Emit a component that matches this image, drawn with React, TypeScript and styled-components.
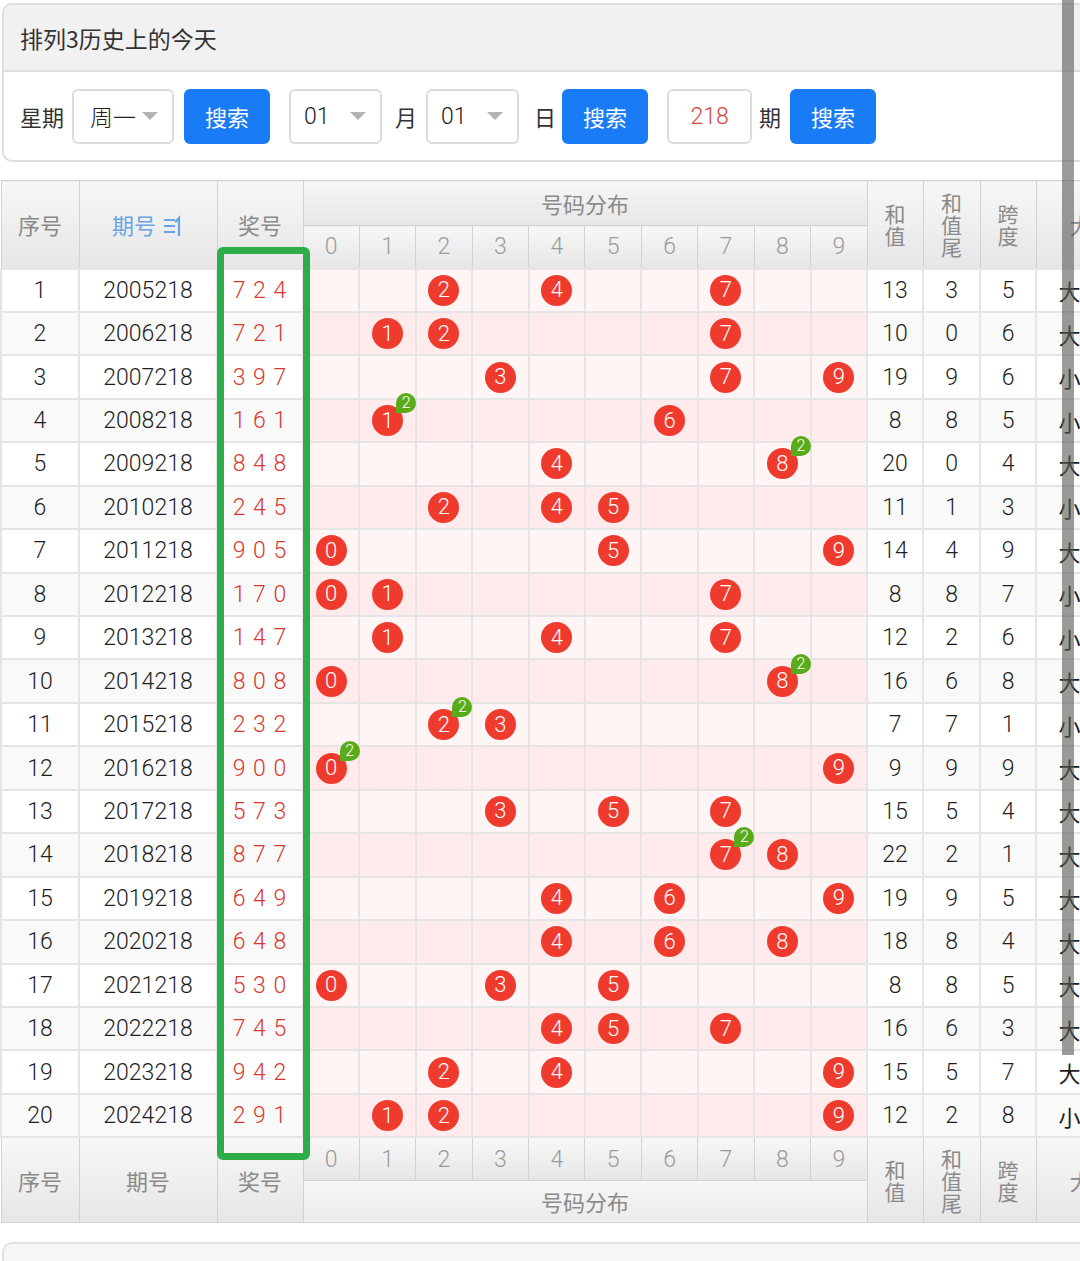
import React from 'react';
import styled, { createGlobalStyle } from 'styled-components';

const GlobalStyle = createGlobalStyle`
  html, body { margin: 0; padding: 0; overflow: hidden; background: #fff; }
  body { font-family: Roboto, "Noto Sans CJK SC", sans-serif; color: #333; }
  * { box-sizing: border-box; }
`;

const CJK = `"Noto Sans CJK SC", "Noto Sans", sans-serif`;
const NUM = `Roboto, "Noto Sans", sans-serif`;

const Page = styled.div`
  position: relative;
  width: 1080px;
  height: 1261px;
  overflow: hidden;
  padding-top: 3px;
`;

const Card = styled.section`
  margin-left: 2px;
  width: 1100px;
  border: 2px solid #dedede;
  border-radius: 10px;
  overflow: hidden;
  background: #fff;
`;

const CardHead = styled.header`
  height: 67px;
  background: #f1f1f1;
  border-bottom: 2px solid #dedede;
  display: flex;
  align-items: center;
  padding-left: 16px;
  font-family: ${CJK};
  font-size: 23px;
  color: #333;
`;

const SearchRow = styled.div`
  height: 88px;
  display: flex;
  align-items: center;
  padding-left: 16px;
`;

const Label = styled.span<{ $ml?: number }>`
  margin-left: ${(p) => p.$ml ?? 0}px;
  font-family: ${CJK};
  font-size: 22px;
  color: #333;
  line-height: 1;
`;

const Select = styled.div<{ $w: number; $pl: number; $ml: number }>`
  margin-left: ${(p) => p.$ml}px;
  width: ${(p) => p.$w}px;
  height: 55px;
  border: 2px solid #dcdcdc;
  border-radius: 6px;
  display: flex;
  align-items: center;
  justify-content: space-between;
  padding: 0 14px 0 ${(p) => p.$pl}px;
  font-family: ${NUM}, "Noto Sans CJK SC";
  font-weight: 300;
  font-size: 23px;
  color: #222;
  background: #fff;
`;

const Caret = styled.span`
  width: 0;
  height: 0;
  border-left: 8px solid transparent;
  border-right: 8px solid transparent;
  border-top: 8px solid #b3b3b3;
`;

const Button = styled.button<{ $ml: number }>`
  margin-left: ${(p) => p.$ml}px;
  width: 86px;
  height: 55px;
  border: none;
  border-radius: 6px;
  background: #1a7bf6;
  color: #fff;
  font-family: ${CJK};
  font-size: 22px;
  padding: 0;
`;

const Input = styled.div<{ $ml: number }>`
  margin-left: ${(p) => p.$ml}px;
  width: 85px;
  height: 55px;
  border: 2px solid #dcdcdc;
  border-radius: 6px;
  display: flex;
  align-items: center;
  justify-content: center;
  font-family: ${NUM};
  font-weight: 300;
  font-size: 23px;
  color: #d9463c;
`;

const TableWrap = styled.div`
  position: relative;
  margin-top: 18px;
  width: 1080px;
  overflow: hidden;
`;

const Table = styled.table`
  border-collapse: collapse;
  table-layout: fixed;
  width: 1146px;
  border-top: 1px solid #d9d9d9;
`;

const Col = styled.col<{ $w: number }>`
  width: ${(p) => p.$w}px;
`;

const HeadRow = styled.tr<{ $h: number }>`
  height: ${(p) => p.$h}px;
`;

const Th = styled.th<{ $blue?: boolean; $light?: boolean }>`
  border: 1px solid #d2d2d2;
  background: ${(p) => (p.$light ? 'linear-gradient(#f6f6f6, #ececec)' : 'linear-gradient(#f7f7f7, #e6e6e6)')};
  color: ${(p) => (p.$blue ? '#6aa3e6' : '#8a8a8a')};
  font-family: ${CJK};
  font-weight: 400;
  font-size: 22px;
  padding: 0;
  text-align: center;
  vertical-align: middle;
  white-space: nowrap;
`;

const DigitTh = styled(Th)`
  font-family: ${NUM};
  font-weight: 300;
  font-size: 23px;
  color: #9a9a9a;
`;

const Stack = styled.span`
  display: block;
  width: 1em;
  margin: 0 auto;
  font-size: 21px;
  line-height: 22px;
  white-space: normal;
`;

const SortIcon = styled.svg`
  width: 20px;
  height: 22px;
  margin-left: 8px;
  vertical-align: -3px;
`;

const BodyRow = styled.tr`
  height: 43.45px;
`;

const Td = styled.td<{ $even: boolean; $pink?: boolean; $red?: boolean }>`
  border: 2px solid #e5e5e5;
  padding: 0;
  text-align: center;
  vertical-align: middle;
  font-family: ${NUM};
  font-weight: 300;
  font-size: 23px;
  color: ${(p) => (p.$red ? '#d8392f' : '#1e1e1e')};
  letter-spacing: ${(p) => (p.$red ? '1px' : '0')};
  white-space: nowrap;
  background: ${(p) =>
    p.$pink ? (p.$even ? '#ffebeb' : '#fff5f5') : p.$even ? '#f9f9f9' : '#ffffff'};
`;

const CJKTd = styled(Td)`
  font-family: ${CJK};
  font-weight: 400;
  font-size: 22px;
  letter-spacing: 0;
`;

const BallWrap = styled.span`
  position: relative;
  display: inline-block;
  vertical-align: middle;
`;

const Ball = styled.span`
  display: flex;
  align-items: center;
  justify-content: center;
  width: 31px;
  height: 31px;
  border-radius: 50%;
  background: #ef3b2e;
  color: #fff;
  font-family: ${NUM};
  font-size: 22px;
  font-weight: 300;
  line-height: 1;
`;

const Badge = styled.span`
  position: absolute;
  left: 24px;
  top: -12px;
  width: 20px;
  height: 20px;
  border-radius: 50% 50% 50% 0;
  background: #5aab19;
  color: #fff;
  font-family: ${NUM};
  font-size: 16px;
  line-height: 20px;
  text-align: center;
`;

const GreenBox = styled.div`
  position: absolute;
  left: 217px;
  top: 67px;
  width: 93px;
  height: 913px;
  border: 7px solid #2eac48;
  border-radius: 6px;
  pointer-events: none;
`;

const NextCard = styled.div`
  margin: 19px 0 0 2px;
  width: 1100px;
  height: 80px;
  border: 2px solid #e2e2e2;
  border-radius: 10px;
  background: #f6f6f6;
`;

const ScrollThumb = styled.div`
  position: absolute;
  left: 1062px;
  top: 0;
  width: 12px;
  height: 1055px;
  background: rgba(88, 90, 84, 0.6);
`;

const issues = [
  '724', '721', '397', '161', '848', '245', '905', '170', '147', '808',
  '232', '900', '573', '877', '649', '648', '530', '745', '942', '291',
];

const colWidths = [78, 138, 86, 56.4, 56.4, 56.4, 56.4, 56.4, 56.4, 56.4, 56.4, 56.4, 56.4, 56, 57, 56, 111];
const digits = [0, 1, 2, 3, 4, 5, 6, 7, 8, 9];

const Sort = () => (
  <SortIcon viewBox="0 0 20 22" fill="none" stroke="#6aa3e6" strokeWidth="2.2" strokeLinecap="square">
    <path d="M1 5H10M1 11H10M1 17H10" />
    <path d="M15 20V3L12 6.5" />
  </SortIcon>
);

const Vertical = ({ text }: { text: string }) => <Stack>{text}</Stack>;

const HeaderTop = () => (
  <>
    <HeadRow $h={45}>
      <Th rowSpan={2}>序号</Th>
      <Th rowSpan={2} $blue>
        期号
        <Sort />
      </Th>
      <Th rowSpan={2}>奖号</Th>
      <Th colSpan={10}>号码分布</Th>
      <Th rowSpan={2}><Vertical text="和值" /></Th>
      <Th rowSpan={2}><Vertical text="和值尾" /></Th>
      <Th rowSpan={2}><Vertical text="跨度" /></Th>
      <Th rowSpan={2}>大小</Th>
    </HeadRow>
    <HeadRow $h={43}>
      {digits.map((d) => (
        <DigitTh key={d}>{d}</DigitTh>
      ))}
    </HeadRow>
  </>
);

const HeaderBottom = () => (
  <>
    <HeadRow $h={43}>
      <Th rowSpan={2}>序号</Th>
      <Th rowSpan={2}>期号</Th>
      <Th rowSpan={2}>奖号</Th>
      {digits.map((d) => (
        <DigitTh key={d}>{d}</DigitTh>
      ))}
      <Th rowSpan={2}><Vertical text="和值" /></Th>
      <Th rowSpan={2}><Vertical text="和值尾" /></Th>
      <Th rowSpan={2}><Vertical text="跨度" /></Th>
      <Th rowSpan={2}>大小</Th>
    </HeadRow>
    <HeadRow $h={42}>
      <Th colSpan={10} $light>号码分布</Th>
    </HeadRow>
  </>
);

export default function App() {
  return (
    <Page>
      <GlobalStyle />
      <Card>
        <CardHead>排列3历史上的今天</CardHead>
        <SearchRow>
          <Label>星期</Label>
          <Select $w={102} $pl={16} $ml={8}>
            <span>周一</span>
            <Caret />
          </Select>
          <Button $ml={10}>搜索</Button>
          <Select $w={93} $pl={13} $ml={19}>
            <span>01</span>
            <Caret />
          </Select>
          <Label $ml={13}>月</Label>
          <Select $w={93} $pl={13} $ml={9}>
            <span>01</span>
            <Caret />
          </Select>
          <Label $ml={15}>日</Label>
          <Button $ml={6}>搜索</Button>
          <Input $ml={19}>218</Input>
          <Label $ml={7}>期</Label>
          <Button $ml={9}>搜索</Button>
        </SearchRow>
      </Card>

      <TableWrap>
        <Table>
          <colgroup>
            {colWidths.map((w, i) => (
              <Col key={i} $w={w} />
            ))}
          </colgroup>
          <thead>
            <HeaderTop />
          </thead>
          <tbody>
            {issues.map((num, i) => {
              const ds = num.split('').map(Number);
              const sum = ds.reduce((a, b) => a + b, 0);
              const span = Math.max(...ds) - Math.min(...ds);
              const pattern = ds.map((d) => (d >= 5 ? '大' : '小')).join('');
              const even = i % 2 === 1;
              return (
                <BodyRow key={i}>
                  <Td $even={even}>{i + 1}</Td>
                  <Td $even={even}>{2005 + i}218</Td>
                  <Td $even={even} $red>{ds.join(' ')}</Td>
                  {digits.map((d) => {
                    const count = ds.filter((x) => x === d).length;
                    return (
                      <Td key={d} $even={even} $pink>
                        {count > 0 && (
                          <BallWrap>
                            <Ball>{d}</Ball>
                            {count > 1 && <Badge>{count}</Badge>}
                          </BallWrap>
                        )}
                      </Td>
                    );
                  })}
                  <Td $even={even}>{sum}</Td>
                  <Td $even={even}>{sum % 10}</Td>
                  <Td $even={even}>{span}</Td>
                  <CJKTd $even={even}>{pattern}</CJKTd>
                </BodyRow>
              );
            })}
          </tbody>
          <tfoot>
            <HeaderBottom />
          </tfoot>
        </Table>
        <GreenBox />
      </TableWrap>
      <NextCard />
      <ScrollThumb />
    </Page>
  );
}
